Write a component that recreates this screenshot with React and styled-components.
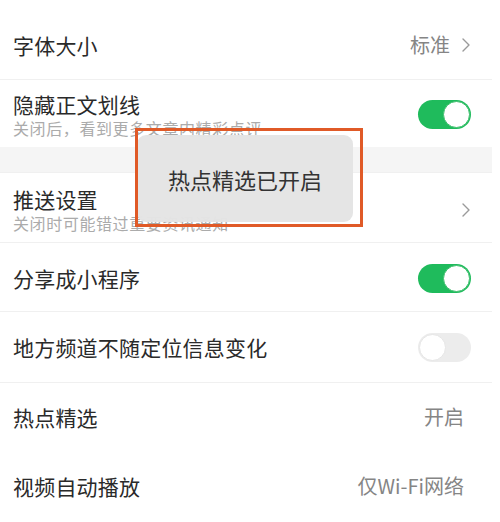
import styled, { createGlobalStyle } from 'styled-components'

const GlobalStyle = createGlobalStyle`
  html, body {
    margin: 0;
    padding: 0;
    background: #ffffff;
  }
  body {
    font-family: 'Noto Sans CJK SC', 'Noto Sans', sans-serif;
    -webkit-font-smoothing: antialiased;
  }
`

const settings = [
  { title: '字体大小', value: '标准', arrow: true, height: 80, offset: 10 },
  {
    title: '隐藏正文划线',
    desc: '关闭后，看到更多文章内精彩点评',
    toggle: true,
    on: true,
    height: 67,
    offset: 3,
    last: true,
  },
  { gap: true },
  {
    title: '推送设置',
    desc: '关闭时可能错过重要资讯通知',
    arrow: true,
    height: 70,
    offset: 4,
  },
  { title: '分享成小程序', toggle: true, on: true, height: 69, offset: 2 },
  { title: '地方频道不随定位信息变化', toggle: true, on: false, height: 71, offset: 0 },
  { title: '热点精选', value: '开启', height: 68, offset: 0, last: true },
  { title: '视频自动播放', value: '仅Wi-Fi网络', height: 69, offset: 2, last: true },
]

const App = () => {
  return (
    <Page>
      <GlobalStyle />
      <List>
        {settings.map((item, i) =>
          item.gap ? (
            <SectionGap key={i} />
          ) : (
            <Row key={i} $height={item.height} $offset={item.offset} $last={item.last}>
              <Texts>
                <Title>{item.title}</Title>
                {item.desc && <Desc>{item.desc}</Desc>}
              </Texts>
              {item.value && <Value $arrow={item.arrow}>{item.value}</Value>}
              {item.arrow && (
                <Chevron viewBox='0 0 10 16' aria-hidden='true'>
                  <polyline points='2,2 8,8 2,14' />
                </Chevron>
              )}
              {item.toggle && (
                <Switch $on={item.on}>
                  <Knob $on={item.on} />
                </Switch>
              )}
            </Row>
          )
        )}
      </List>
      <Toast>热点精选已开启</Toast>
      <Highlight />
    </Page>
  )
}

const Page = styled.div`
  position: relative;
  width: 500px;
  height: 522px;
  overflow: hidden;
  background: #ffffff;
`

const List = styled.div`
  width: 492px;
  display: flex;
  flex-direction: column;
`

const Row = styled.div`
  box-sizing: border-box;
  height: ${(p) => p.$height}px;
  padding: ${(p) => p.$offset}px 21px 0 13px;
  display: flex;
  align-items: center;
  gap: 11px;
  border-bottom: 1px solid ${(p) => (p.$last ? 'transparent' : '#f0f0f0')};
`

const SectionGap = styled.div`
  height: 25px;
  background: #f5f5f5;
  border-bottom: 1px solid #f0f0f0;
`

const Texts = styled.div`
  flex: 1;
  display: flex;
  flex-direction: column;
  min-width: 0;
`

const Title = styled.div`
  font-size: 21px;
  line-height: 26px;
  color: #2a2a2a;
  letter-spacing: 0.2px;
`

const Desc = styled.div`
  font-size: 16px;
  line-height: 22px;
  color: #ababab;
  letter-spacing: 0.6px;
`

const Value = styled.div`
  font-size: 20px;
  line-height: 24px;
  color: #858585;
  margin-right: ${(p) => (p.$arrow ? 0 : 7)}px;
`

const Chevron = styled.svg`
  width: 10px;
  height: 16px;
  fill: none;
  stroke: #9a9a9a;
  stroke-width: 1.4;
  stroke-linecap: round;
  stroke-linejoin: round;
`

const Switch = styled.div`
  box-sizing: border-box;
  width: 53px;
  height: 29px;
  border-radius: 15px;
  background: ${(p) => (p.$on ? '#1fbb5c' : '#ececec')};
  padding: 1px;
  display: flex;
  justify-content: ${(p) => (p.$on ? 'flex-end' : 'flex-start')};
`

const Knob = styled.div`
  box-sizing: border-box;
  width: 27px;
  height: 27px;
  border-radius: 50%;
  background: #ffffff;
  border: 1px solid ${(p) => (p.$on ? '#3fbf6e' : '#e6e6e6')};
`

const Toast = styled.div`
  position: absolute;
  left: 137px;
  top: 135px;
  width: 216px;
  height: 87px;
  border-radius: 9px;
  background: rgba(228, 228, 228, 0.97);
  display: flex;
  align-items: center;
  justify-content: center;
  font-size: 22px;
  color: #333333;
`

const Highlight = styled.div`
  position: absolute;
  left: 135px;
  top: 128px;
  width: 228px;
  height: 99px;
  box-sizing: border-box;
  border: 3px solid #e05a27;
  pointer-events: none;
`

export default App
